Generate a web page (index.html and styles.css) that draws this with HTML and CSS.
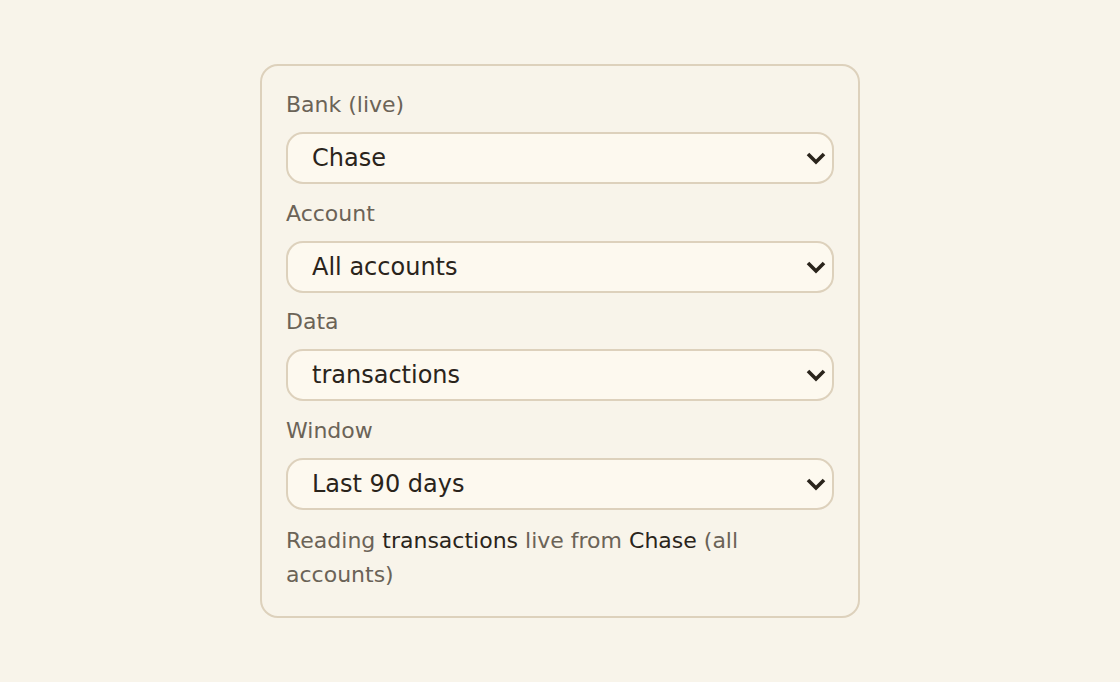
FILE: index.html
```html
<!DOCTYPE html>
<html lang="en">
<head>
  <meta charset="UTF-8">
  <title>Live source</title>
  <meta name="viewport" content="width=device-width, initial-scale=1.0">
  <link rel="stylesheet" href="styles.css">
</head>
<body>
  <div class="panel">
    <label class="field">
      <span class="field-label">Bank (live)</span>
      <span class="picker-wrap">
        <select class="picker">
          <option>Chase</option>
          <option>Bank of America</option>
          <option>Wells Fargo</option>
        </select>
        <svg class="chevron" viewBox="0 0 20 14"><path d="M2 3l8 8 8-8"/></svg>
      </span>
    </label>

    <label class="field">
      <span class="field-label">Account</span>
      <span class="picker-wrap">
        <select class="picker">
          <option>All accounts</option>
          <option>Checking</option>
          <option>Savings</option>
        </select>
        <svg class="chevron" viewBox="0 0 20 14"><path d="M2 3l8 8 8-8"/></svg>
      </span>
    </label>

    <label class="field">
      <span class="field-label">Data</span>
      <span class="picker-wrap">
        <select class="picker">
          <option>transactions</option>
          <option>balances</option>
        </select>
        <svg class="chevron" viewBox="0 0 20 14"><path d="M2 3l8 8 8-8"/></svg>
      </span>
    </label>

    <label class="field">
      <span class="field-label">Window</span>
      <span class="picker-wrap">
        <select class="picker">
          <option>Last 30 days</option>
          <option selected>Last 90 days</option>
          <option>Last 12 months</option>
        </select>
        <svg class="chevron" viewBox="0 0 20 14"><path d="M2 3l8 8 8-8"/></svg>
      </span>
    </label>

    <p class="summary">Reading <b>transactions</b> live from <b>Chase</b> (all accounts)</p>
  </div>
</body>
</html>
```

FILE: styles.css
```css
body {
  margin: 0;
  padding-top: 64px;
  font-family: 'DejaVu Sans', 'Noto Sans', sans-serif;
  background: #f8f4ea;
  color: #2a241b;
}

.panel {
  width: 600px;
  box-sizing: border-box;
  margin: 0 auto;
  padding: 23px 24px 24px;
  border: 2px solid #ddd1bc;
  border-radius: 18px;
  display: flex;
  flex-direction: column;
  gap: 13.7px;
}

.field {
  display: flex;
  flex-direction: column;
  gap: 11px;
}

.field-label {
  font-size: 22px;
  line-height: 32px;
  color: #6b6357;
}

.picker-wrap {
  position: relative;
  display: block;
}

.picker {
  width: 100%;
  height: 52px;
  padding: 0 44px 0 24px;
  appearance: none;
  font-family: inherit;
  font-size: 24px;
  color: #2a241b;
  background-color: #fdf9ef;
  border: 2px solid #ddd1bc;
  border-radius: 17px;
}

/* custom arrow, sits over the select */
.chevron {
  position: absolute;
  right: 8px;
  top: 50%;
  width: 20px;
  height: 14px;
  margin-top: -7px;
  pointer-events: none;
  fill: none;
  stroke: #2a241b;
  stroke-width: 3.6;
  stroke-linejoin: miter;
}

.summary {
  margin: 0;
  font-size: 22px;
  line-height: 34px;
  color: #6b6357;
}

.summary b {
  font-weight: normal;
  color: #2a241b;
}
```
